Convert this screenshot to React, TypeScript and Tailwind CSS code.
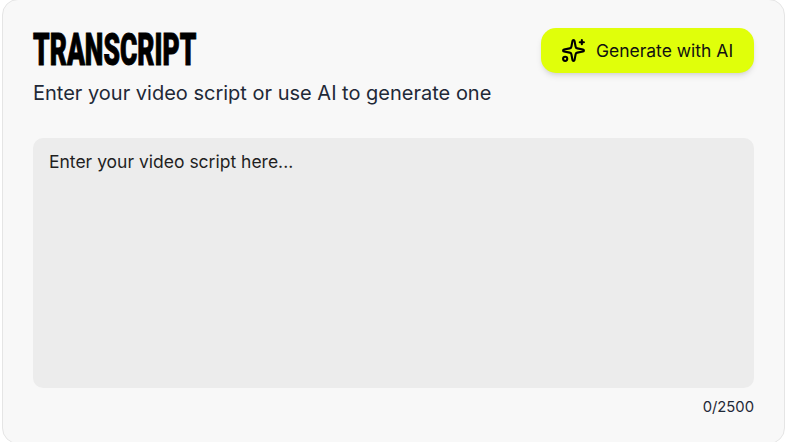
import { Sparkles } from 'lucide-react'

export default function App() {
  return (
    <div className="h-[442px] w-[787px] overflow-hidden bg-white font-['Inter',sans-serif]">
      <div className="mx-[2px] -mt-px flex h-[445px] w-[783px] flex-col rounded-[16px] border border-[#e5e5e5] bg-[#f8f8f8] px-[30px] pt-[28px]">
        <div className="flex items-start justify-between">
          <div>
            <h2 className="h-[44px] origin-left scale-x-[0.6] text-[44px] leading-[44px] font-black whitespace-nowrap text-black [-webkit-text-stroke:1px_black] font-['Roboto',sans-serif]">
              TRANSCRIPT
            </h2>
            <p className="mt-[7px] text-[20px] leading-[28px] text-[#1f2937]">
              Enter your video script or use AI to generate one
            </p>
          </div>
          <button className="flex h-[45px] w-[213px] items-center justify-center gap-[10px] rounded-[15px] bg-[#e0ff0a] pt-px pr-px text-[17.5px] text-[#111111] shadow-md">
            <Sparkles size={25} strokeWidth={2} className="-mt-px text-black" />
            Generate with AI
          </button>
        </div>
        <div className="mt-[31px] h-[250px] w-full rounded-[10px] bg-[#ececec] px-4 py-3 text-[17.5px] leading-[24px] text-[#1f1f1f]">
          Enter your video script here...
        </div>
        <div className="mt-[9px] text-right text-[14.8px] leading-[20px] text-[#1f2937]">0/2500</div>
      </div>
    </div>
  )
}
